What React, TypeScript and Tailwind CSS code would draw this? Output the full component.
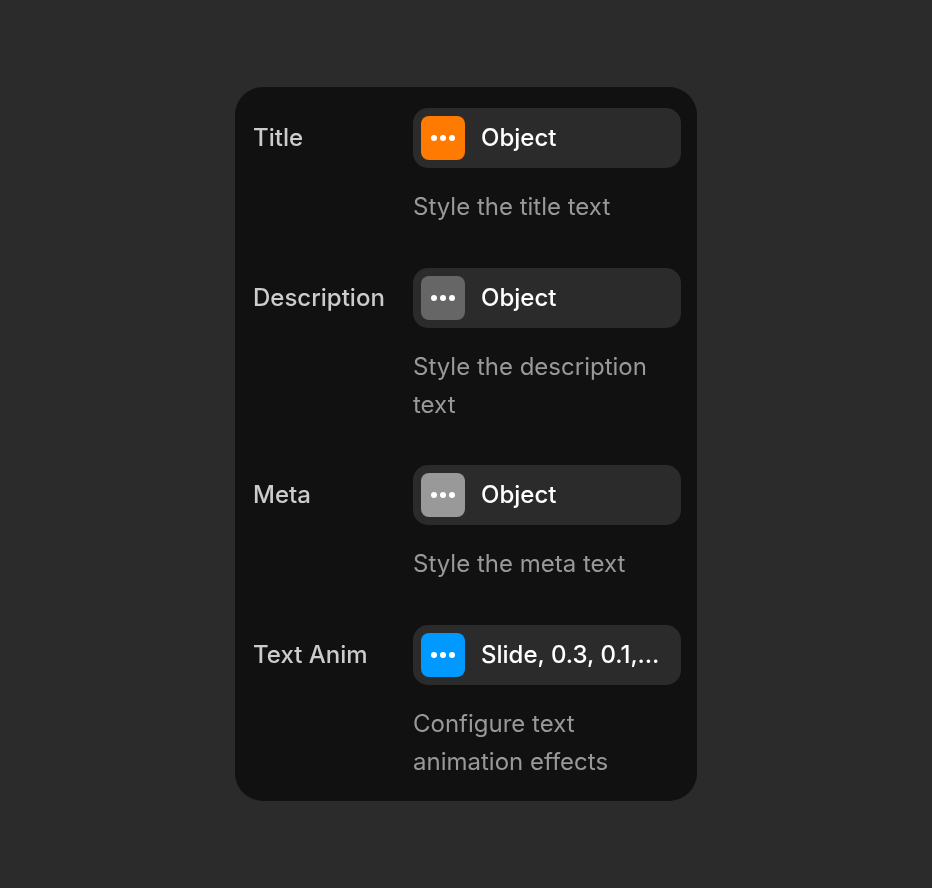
const ROWS = [
  { label: "Title", value: "Object", color: "bg-[#ff7a00]", hint: "Style the title text" },
  { label: "Description", value: "Object", color: "bg-[#666666]", hint: "Style the description text" },
  { label: "Meta", value: "Object", color: "bg-[#999999]", hint: "Style the meta text" },
  { label: "Text Anim", value: "Slide, 0.3, 0.1, Word", color: "bg-[#0099ff]", hint: "Configure text animation effects" },
];

export default function App() {
  return (
    <div className="min-h-[888px] bg-[#2b2b2b] flex items-start justify-center pt-[87px] font-['Inter',sans-serif]">
      <div className="w-[462px] h-[714px] rounded-[28px] bg-[#111111] pt-[21px] pl-[18px] pr-4 flex flex-col gap-[42px] will-change-transform">
        {ROWS.map((row) => (
          <div key={row.label} className="flex">
            <div className="w-[160px] h-[60px] flex items-center text-[24px] font-medium text-[#cccccc]">
              {row.label}
            </div>
            <div className="w-[268px] flex flex-col">
              <div className="h-[60px] rounded-[15px] bg-[#2b2b2b] flex items-center pl-2 pr-5 gap-4">
                <div className={`w-11 h-11 rounded-lg shrink-0 flex items-center justify-center gap-[3px] ${row.color}`}>
                  <span className="w-[6px] h-[6px] rounded-full bg-white" />
                  <span className="w-[6px] h-[6px] rounded-full bg-white" />
                  <span className="w-[6px] h-[6px] rounded-full bg-white" />
                </div>
                <span className="text-[24px] font-medium text-white truncate">{row.value}</span>
              </div>
              <p className="mt-5 text-[24px] leading-[37.8px] text-[#999999]">{row.hint}</p>
            </div>
          </div>
        ))}
      </div>
    </div>
  );
}
